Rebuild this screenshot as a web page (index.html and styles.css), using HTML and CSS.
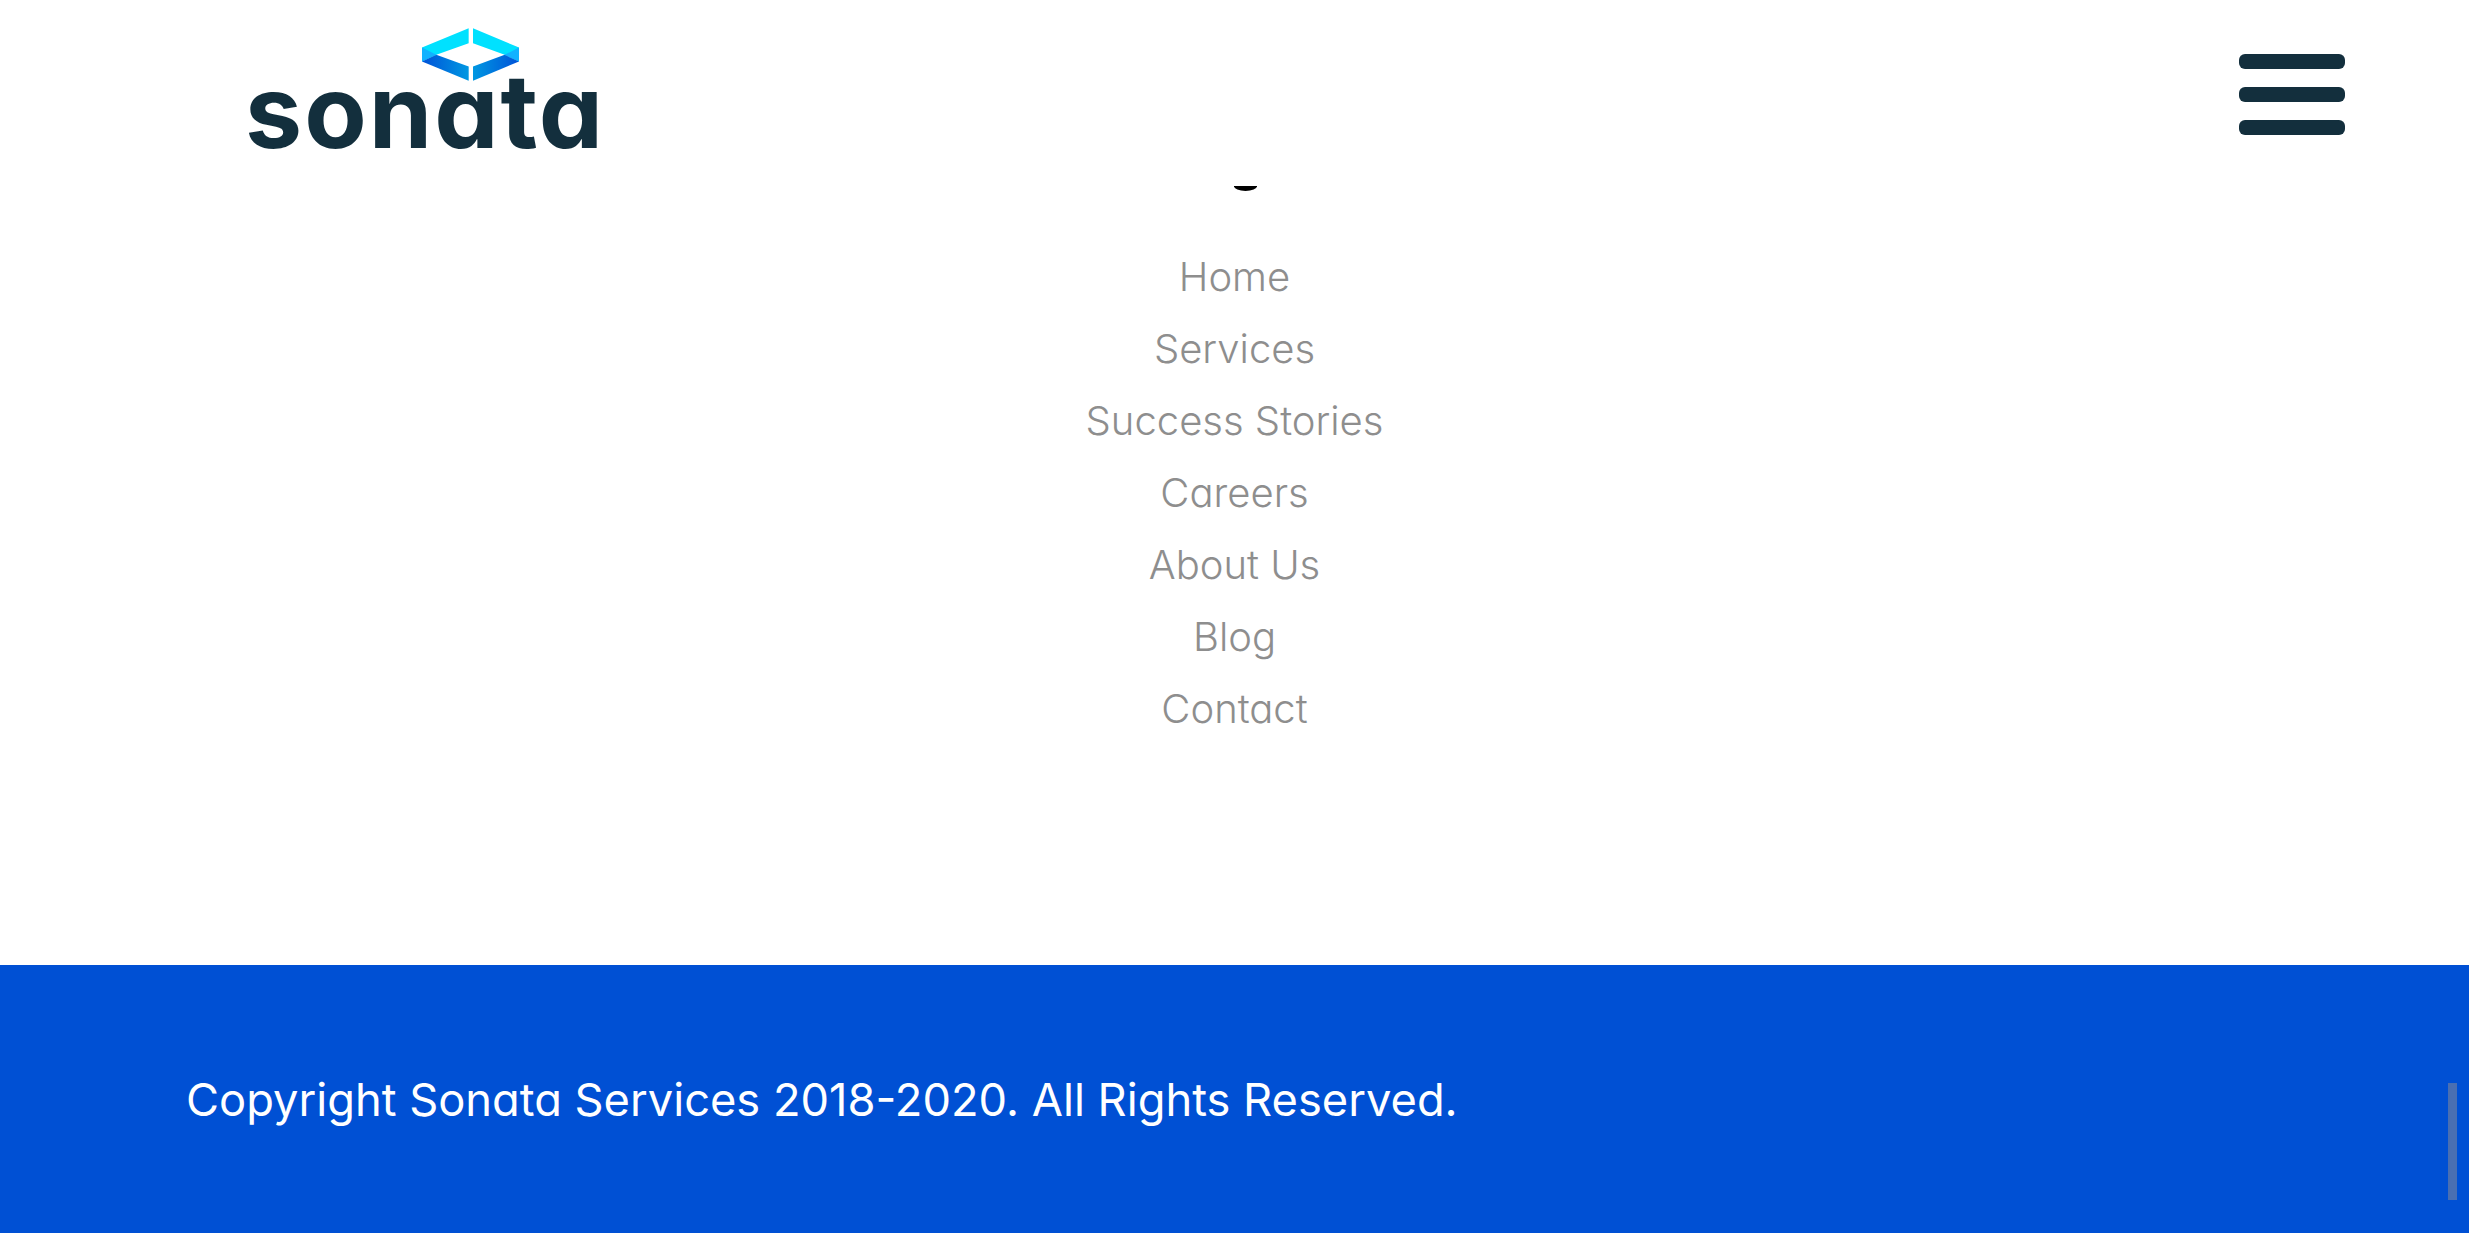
FILE: index.html
```html
<!DOCTYPE html>
<html lang="en">
<head>
<meta charset="utf-8">
<title>Sonata Services</title>
<link rel="stylesheet" href="styles.css">
</head>
<body>
<header class="site-header">
  <a class="logo" href="#">
    <svg class="logo-mark" viewBox="607 55 291 158" width="97" height="53" aria-hidden="true">
      <defs>
        <linearGradient id="lowL" x1="0" y1="0" x2="1" y2="0"><stop offset="0" stop-color="#0052d8"/><stop offset="1" stop-color="#0098e2"/></linearGradient>
        <linearGradient id="lowR" x1="1" y1="0" x2="0" y2="0"><stop offset="0" stop-color="#0052d8"/><stop offset="1" stop-color="#0098e2"/></linearGradient>
      </defs>
      <polygon points="607,113 747,55 747,100 650,135 607,155" fill="#00e1ff"/>
      <polygon points="607,113 650,135 607,155" fill="#12b2ff"/>
      <polygon points="607,155 650,135 747,170 747,213" fill="url(#lowL)"/>
      <polygon points="898,113 760,55 760,100 855,135 898,155" fill="#00e1ff"/>
      <polygon points="898,113 855,135 898,155" fill="#12b2ff"/>
      <polygon points="898,155 855,135 760,170 760,213" fill="url(#lowR)"/>
    </svg>
    <span class="logo-word">sonata</span>
  </a>
  <button class="menu-toggle" type="button" aria-label="Menu">
    <span class="menu-bar"></span>
    <span class="menu-bar"></span>
    <span class="menu-bar"></span>
  </button>
</header>
<main class="content">
  <div class="heading-tail"></div>
  <nav>
    <ul class="site-links">
      <li><a href="#">Home</a></li>
      <li><a href="#">Services</a></li>
      <li><a href="#">Success Stories</a></li>
      <li><a href="#">Careers</a></li>
      <li><a href="#">About Us</a></li>
      <li><a href="#">Blog</a></li>
      <li><a href="#">Contact</a></li>
    </ul>
  </nav>
</main>
<footer class="site-footer">
  <p class="copyright">Copyright Sonata Services 2018-2020. All Rights Reserved.</p>
  <div class="scroll-thumb"></div>
</footer>
</body>
</html>
```
FILE: styles.css
```css
* { box-sizing: border-box; }
html, body { height: 100%; }
body {
  margin: 0;
  height: 100vh;
  overflow: hidden;
  display: flex;
  flex-direction: column;
  background: #fff;
  font-family: "Inter", "Liberation Sans", sans-serif;
  font-feature-settings: "cv11" 1;
}
.site-header {
  height: 186px;
  flex: none;
  display: flex;
  justify-content: space-between;
  align-items: flex-start;
  padding: 0 124px 0 245px;
}
.logo {
  position: relative;
  display: block;
  margin-top: 61px;
  color: #132f3d;
  text-decoration: none;
}
.logo-word {
  display: block;
  font-size: 102px;
  line-height: 100px;
  font-weight: 700;
  letter-spacing: 2px;
}
.logo-mark {
  position: absolute;
  left: 177px;
  top: -33px;
  display: block;
}
.menu-toggle {
  display: flex;
  flex-direction: column;
  gap: 18px;
  width: 106px;
  margin-top: 54px;
  padding: 0;
  border: 0;
  background: none;
}
.menu-bar {
  display: block;
  width: 100%;
  height: 15px;
  border-radius: 6px;
  background: #132f3d;
}
.content {
  flex: 1;
}
.heading-tail {
  width: 23px;
  height: 5px;
  margin-left: calc(50% - 1px);
  background: #000;
  border-radius: 0 0 12px 12px / 0 0 5px 5px;
}
.site-links {
  list-style: none;
  margin: 50px 0 0;
  padding: 0;
  text-align: center;
}
.site-links li {
  height: 72px;
  line-height: 72px;
  font-size: 40px;
  font-weight: 300;
}
.site-links a {
  color: #8e8e8e;
  text-decoration: none;
}
.site-footer {
  position: relative;
  flex: none;
  height: 268px;
  display: flex;
  align-items: center;
  padding-left: 186px;
  background: #0050d4;
}
.copyright {
  margin: 0;
  color: #fff;
  font-size: 45.25px;
  font-weight: 400;
}
.scroll-thumb {
  position: absolute;
  left: 2448px;
  top: 118px;
  width: 9px;
  height: 117px;
  background: #4a6fb2;
}
```
